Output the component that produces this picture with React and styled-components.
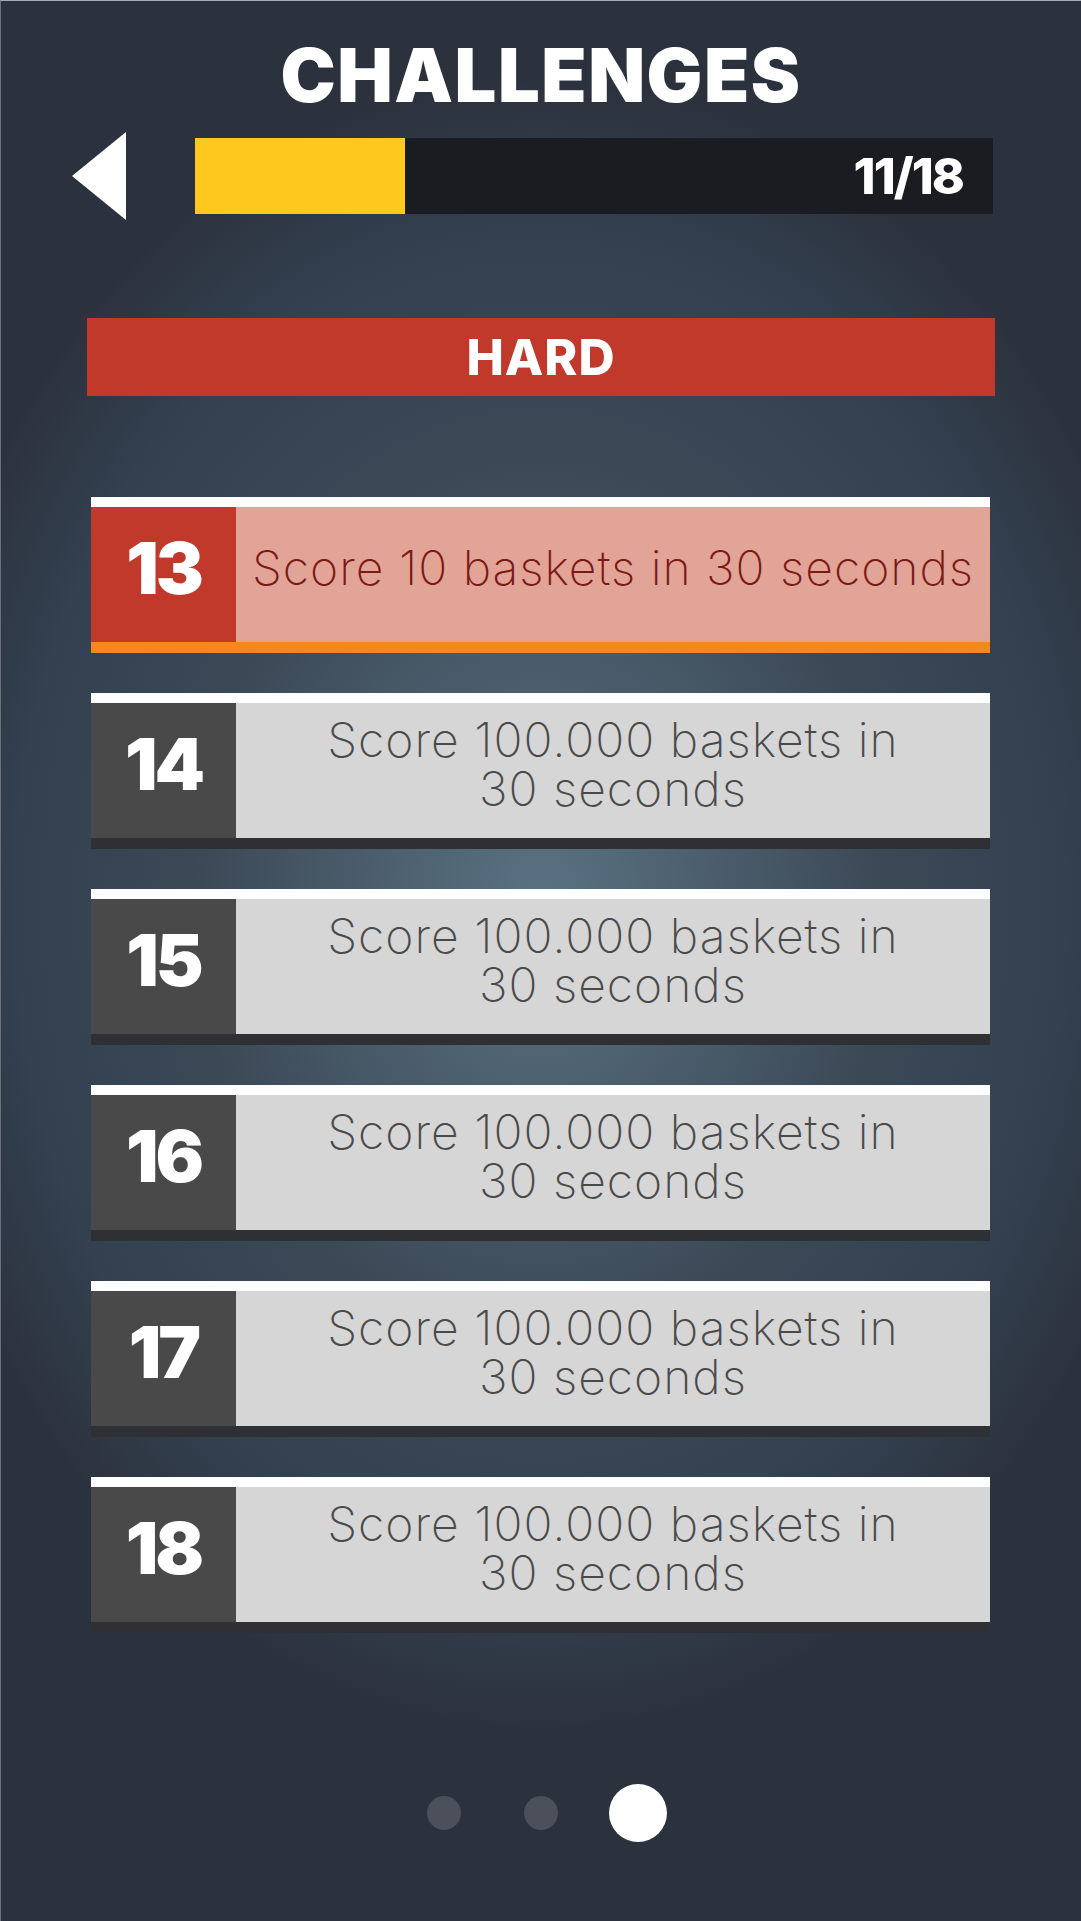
import React from 'react'
import styled, { createGlobalStyle } from 'styled-components'

const GlobalStyle = createGlobalStyle`
  html, body {
    margin: 0;
    padding: 0;
    background: #2c323d;
  }
  * {
    box-sizing: border-box;
  }
`

const Screen = styled.div`
  width: 100%;
  min-height: 1921px;
  display: flex;
  flex-direction: column;
  align-items: stretch;
  border-top: 1px solid #a9adb3;
  border-left: 1px solid #6b7079;
  font-family: Inter, "Open Sans", sans-serif;
  background: radial-gradient(
    ellipse 700px 900px at 50% 47%,
    #5a7282 0%,
    #3b4856 50%,
    #334050 75%,
    #2c323d 92%
  );
`

const Title = styled.h1`
  margin: 34px 0 0;
  height: 80px;
  line-height: 80px;
  text-align: center;
  color: #fff;
  font-size: 74px;
  font-weight: 900;
  letter-spacing: 1.5px;
`

const TopBar = styled.div`
  display: flex;
  align-items: center;
  margin-top: 17px;
  padding: 0 88px 0 70px;
  height: 88px;
`

const BackButton = styled.button`
  border: 0;
  padding: 0;
  background: none;
  width: 56px;
  height: 88px;
  cursor: pointer;
  display: flex;
  svg {
    display: block;
  }
`

const Progress = styled.div`
  position: relative;
  margin-left: 68px;
  flex: 1;
  height: 76px;
  background: #1a1c21;
  display: flex;
  align-items: center;
  justify-content: flex-end;
  padding-right: 30px;
`

const ProgressFill = styled.div`
  position: absolute;
  left: 0;
  top: 0;
  bottom: 0;
  background: #ffc81f;
`

const ProgressLabel = styled.span`
  position: relative;
  color: #fff;
  font-size: 50px;
  font-weight: 800;
  letter-spacing: -2px;
`

const Banner = styled.div`
  margin: 98px 86px 0 86px;
  height: 78px;
  background: #c0392b;
  color: #fff;
  display: flex;
  align-items: center;
  justify-content: center;
  font-size: 50px;
  font-weight: 800;
  letter-spacing: 1px;
`

const List = styled.div`
  margin: 101px 91px 0 90px;
  display: flex;
  flex-direction: column;
  gap: 40px;
`

const Row = styled.div`
  display: flex;
  height: 156px;
  border-top: 10px solid #fff;
  border-bottom: 11px solid ${p => (p.$active ? '#f7861f' : '#2f3033')};
`

const Number = styled.div`
  width: 145px;
  flex: none;
  display: flex;
  align-items: center;
  justify-content: center;
  padding-bottom: 14px;
  background: ${p => (p.$active ? '#c0392b' : '#494949')};
  color: #fff;
  font-size: 72px;
  font-weight: 900;
  letter-spacing: -3px;
`

const Description = styled.div`
  flex: 1;
  display: flex;
  align-items: center;
  justify-content: center;
  text-align: center;
  padding: 0 6px 14px;
  background: ${p => (p.$active ? '#e2a497' : '#d6d6d6')};
  color: ${p => (p.$active ? '#7b1a14' : '#4a4a4a')};
  font-size: 48px;
  font-weight: 200;
  letter-spacing: 1px;
  line-height: 49px;
  white-space: pre-line;
`

const Dots = styled.div`
  margin-top: 151px;
  display: flex;
  align-items: center;
  justify-content: center;
  height: 58px;
`

const DotSlot = styled.div`
  width: 97px;
  display: flex;
  justify-content: center;
`

const Dot = styled.span`
  width: ${p => (p.$current ? 58 : 34)}px;
  height: ${p => (p.$current ? 58 : 34)}px;
  border-radius: 50%;
  background: ${p => (p.$current ? '#fff' : '#4c505b')};
`

const challenges = [
  { id: 13, text: 'Score 10 baskets in 30 seconds', active: true },
  { id: 14, text: 'Score 100.000 baskets in\n30 seconds' },
  { id: 15, text: 'Score 100.000 baskets in\n30 seconds' },
  { id: 16, text: 'Score 100.000 baskets in\n30 seconds' },
  { id: 17, text: 'Score 100.000 baskets in\n30 seconds' },
  { id: 18, text: 'Score 100.000 baskets in\n30 seconds' }
]

const done = 11
const total = 18
const pages = [false, false, true]

export default function App () {
  return (
    <Screen>
      <GlobalStyle />
      <Title>CHALLENGES</Title>
      <TopBar>
        <BackButton aria-label="Back">
          <svg width="56" height="88" viewBox="0 0 56 88">
            <polygon points="55,0 55,88 1,44" fill="#fff" />
          </svg>
        </BackButton>
        <Progress>
          <ProgressFill style={{ width: `${(210 / 798) * 100}%` }} />
          <ProgressLabel>{done}/{total}</ProgressLabel>
        </Progress>
      </TopBar>
      <Banner>HARD</Banner>
      <List>
        {challenges.map(c => (
          <Row key={c.id} $active={c.active}>
            <Number $active={c.active}>{c.id}</Number>
            <Description $active={c.active}>{c.text}</Description>
          </Row>
        ))}
      </List>
      <Dots>
        {pages.map((current, i) => (
          <DotSlot key={i}>
            <Dot $current={current} />
          </DotSlot>
        ))}
      </Dots>
    </Screen>
  )
}
